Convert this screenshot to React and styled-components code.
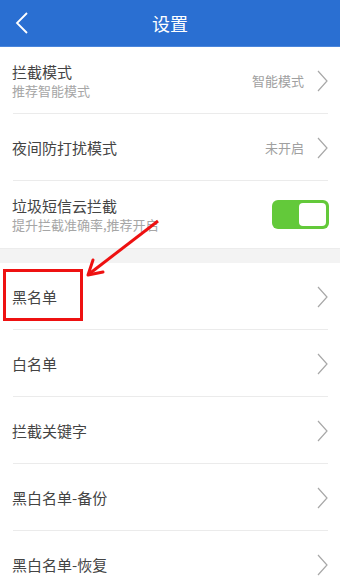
import React from 'react';
import styled, { createGlobalStyle } from 'styled-components';

const Global = createGlobalStyle`
  body {
    margin: 0;
    background: #f3f3f3;
    font-family: "Noto Sans CJK SC", "Noto Sans", sans-serif;
  }
`;

const Page = styled.div`
  position: relative;
  width: 340px;
  min-height: 587px;
  overflow: hidden;
  background: #f3f3f3;
`;

const Header = styled.div`
  height: 46px;
  border-bottom: 1px solid #4a86dc;
  background: #2a6fd2;
  display: flex;
  align-items: center;
  justify-content: center;
  position: relative;
  color: #fff;
  font-size: 18px;
`;

const Back = styled.div`
  position: absolute;
  left: 15px;
  top: 12px;
  width: 16px;
  height: 22px;
`;

const Group = styled.div`
  background: #fff;
  margin-bottom: ${p => (p.$gap ? '14px' : '0')};
  border-bottom: ${p => (p.$gap ? '1px solid #ececec' : 'none')};
`;

const Row = styled.div`
  height: 67px;
  box-sizing: border-box;
  padding: 0 12px;
  display: flex;
  align-items: center;
  position: relative;
  &:not(:last-child)::after {
    content: '';
    position: absolute;
    left: 13px;
    right: 12px;
    bottom: 0;
    height: 1px;
    background: #ebebeb;
  }
`;

const Texts = styled.div`
  flex: 1;
  display: flex;
  flex-direction: column;
`;

const Title = styled.div`
  font-size: 15px;
  line-height: 20px;
  color: #444;
`;

const Sub = styled.div`
  font-size: 13px;
  line-height: 18px;
  color: #a6a6a6;
`;

const Value = styled.div`
  font-size: 13px;
  color: #a0a0a0;
  margin-right: 13px;
`;

const Toggle = styled.div`
  width: 57px;
  height: 29px;
  box-sizing: border-box;
  border-radius: 6px;
  background: #63c93a;
  padding: 3px;
  display: flex;
  justify-content: flex-end;
  margin-right: -1px;
`;

const Knob = styled.div`
  width: 27px;
  height: 23px;
  border-radius: 4px;
  background: #fff;
`;

const Mark = styled.div`
  position: absolute;
  left: 3px;
  top: 269px;
  width: 80px;
  height: 52px;
  box-sizing: border-box;
  border: 3px solid #ee1111;
`;

const Arrow = styled.svg`
  position: absolute;
  left: 80px;
  top: 215px;
`;

const Chevron = () => (
  <svg width="11" height="22" viewBox="0 0 11 22">
    <path d="M1 1 L10 11 L1 21" fill="none" stroke="#a8a8a8" strokeWidth="1.2" />
  </svg>
);

const Item = ({ title, sub, value, toggle }) => (
  <Row>
    <Texts>
      <Title>{title}</Title>
      {sub && <Sub>{sub}</Sub>}
    </Texts>
    {value && <Value>{value}</Value>}
    {toggle ? (
      <Toggle>
        <Knob />
      </Toggle>
    ) : (
      <Chevron />
    )}
  </Row>
);

export default function App() {
  return (
    <Page>
      <Global />
      <Header>
        <Back>
          <svg width="16" height="22" viewBox="0 0 16 22">
            <path d="M12 1 L2 11 L12 21" fill="none" stroke="#fff" strokeWidth="1.8" />
          </svg>
        </Back>
        设置
      </Header>
      <Group $gap>
        <Item title="拦截模式" sub="推荐智能模式" value="智能模式" />
        <Item title="夜间防打扰模式" value="未开启" />
        <Item title="垃圾短信云拦截" sub="提升拦截准确率,推荐开启" toggle />
      </Group>
      <Group>
        <Item title="黑名单" />
        <Item title="白名单" />
        <Item title="拦截关键字" />
        <Item title="黑白名单-备份" />
        <Item title="黑白名单-恢复" />
      </Group>
      <Mark />
      <Arrow width="90" height="70" viewBox="0 0 90 70">
        <path d="M78 6 L9 59" stroke="#ee1111" strokeWidth="3" fill="none" />
        <path d="M8 60 L13 45 M8 60 L23 57" stroke="#ee1111" strokeWidth="3" fill="none" strokeLinecap="round" />
      </Arrow>
    </Page>
  );
}
